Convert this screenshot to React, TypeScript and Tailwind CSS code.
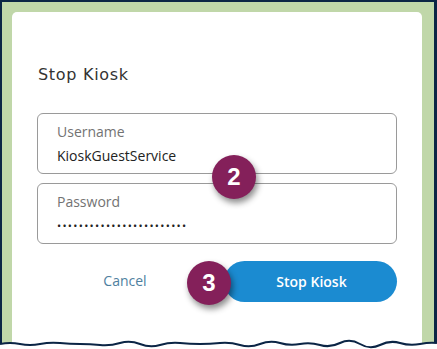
import React from 'react';

const Badge: React.FC<{ n: string; className?: string }> = ({ n, className }) => (
  <div
    className={`absolute w-[44px] h-[44px] rounded-full bg-[#84205a] text-white flex items-center justify-center text-[24px] font-bold shadow-[2px_4px_6px_rgba(0,0,0,0.45)] ${className ?? ''}`}
    style={{ fontFamily: 'Arial, "Liberation Sans", sans-serif' }}
  >
    {n}
  </div>
);

const Field: React.FC<{ label: string; value: string; dots?: boolean }> = ({ label, value, dots }) => (
  <div className="h-[61px] rounded-[6px] border border-[#9a9a9a] px-[19px] pt-[8px]">
    <div className="text-[14px] leading-[20px] text-[#737373]">{label}</div>
    <div
      className={`leading-[20px] text-[#222] mt-[4px] ${dots ? 'text-[11px] tracking-[1.3px]' : 'text-[14px]'}`}
    >
      {value}
    </div>
  </div>
);

export default function App() {
  return (
    <div
      className="relative w-[437px] h-[349px] bg-white overflow-hidden"
      style={{ fontFamily: '"Open Sans", sans-serif' }}
    >
      <div className="h-[346px] bg-[#0b2545] pt-[2px] pl-[2px] pr-[3px]">
        <div className="h-full bg-[#c0d7a9] pt-[10px] pl-[10px] pr-[12px]">
          <div className="relative h-full bg-white rounded-t-[5px] px-[25px] pt-[52px]">
            <h1
              className="text-[16px] leading-[22px] text-[#333] tracking-[0.7px] pl-[1px]"
              style={{ fontFamily: '"DejaVu Sans", sans-serif' }}
            >
              Stop Kiosk
            </h1>
            <div className="mt-[27px] flex flex-col gap-[9px]">
              <Field label="Username" value="KioskGuestService" />
              <Field label="Password" value="••••••••••••••••••••••••" dots />
            </div>
            <div className="mt-[17px] flex items-center">
              <div className="w-[187px] text-center text-[14px] text-[#4f7fa0] pr-[11px] pb-[2px]">Cancel</div>
              <div className="flex-1 h-[41px] rounded-full bg-[#1b8bd1] text-white text-[14px] font-semibold flex items-center justify-center pl-[2px]">
                Stop Kiosk
              </div>
            </div>
            <Badge n="2" className="left-[200px] top-[143px]" />
            <Badge n="3" className="left-[175px] top-[249px]" />
          </div>
        </div>
      </div>
      <svg className="absolute left-0 bottom-0" width="437" height="10" viewBox="0 0 437 10">
        <path
          d="M0 5 Q10 3 20 5 T40 5 T60 4 T80 5 T100 6 T120 4 T140 5 T160 6 T180 4 T200 5 T220 4 T240 6 T260 5 T280 4 T300 5 T320 6 T340 4 T360 5 T380 6 T400 4 T420 5 T437 4 L437 10 L0 10 Z"
          fill="white"
        />
        <path
          d="M0 5 Q10 3 20 5 T40 5 T60 4 T80 5 T100 6 T120 4 T140 5 T160 6 T180 4 T200 5 T220 4 T240 6 T260 5 T280 4 T300 5 T320 6 T340 4 T360 5 T380 6 T400 4 T420 5 T437 4"
          fill="none"
          stroke="#0b2545"
          strokeWidth="2"
        />
      </svg>
    </div>
  );
}
